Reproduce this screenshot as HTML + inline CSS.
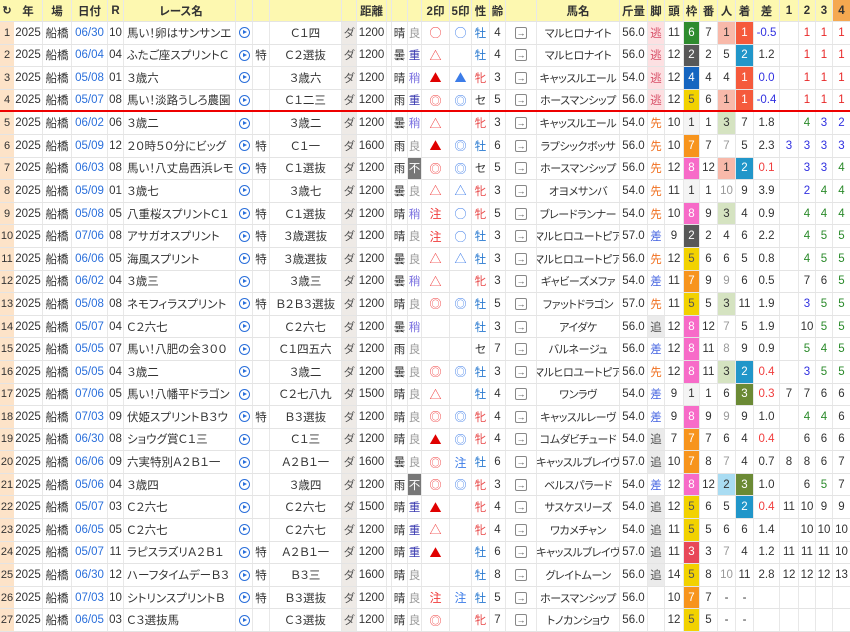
<!DOCTYPE html>
<html><head><meta charset="utf-8"><style>
*{margin:0;padding:0;box-sizing:border-box}
body{width:850px;height:632px;overflow:hidden;background:#fff;font-family:"Liberation Sans","Noto Sans CJK JP",sans-serif;font-size:11.5px;color:#333;font-feature-settings:"palt"}
.r{display:flex;height:22.6px;border-bottom:1px solid #e4e4e4}
.h{height:22px;background:#fdf8b0;font-weight:bold;border-bottom:1px solid #e4e4e4}
.r span{flex:none;display:flex;align-items:center;justify-content:center;border-right:1px solid #e8e8e8;white-space:nowrap;overflow:hidden}
.r span:nth-child(1){width:14px;background:#fde3c8;border-right:none;overflow:visible;font-size:11px}
.h span:nth-child(1){background:#fdf8b0}
.r span:nth-child(2){width:29px}.r span:nth-child(3){width:29px}.r span:nth-child(4){width:36px;color:#2a6fdb}
.r span:nth-child(5){width:16px}.r span:nth-child(6){width:112px;justify-content:flex-start;padding-left:3px}
.h span:nth-child(6){justify-content:center}
.r span:nth-child(7){width:17px}.r span:nth-child(8){width:17px}.r span:nth-child(9){width:72px}
.r span:nth-child(10){width:15px;background:#eeeae6;color:#555}.h span:nth-child(10){background:#fdf8b0}
.r span:nth-child(11){width:30px}.r span:nth-child(12){width:5px}.r span:nth-child(13){width:16px}
.r span:nth-child(14){width:14px}.r span:nth-child(15){width:28px}.r span:nth-child(16){width:22px}
.r span:nth-child(17){width:18px}.r span:nth-child(18){width:16px}.r span:nth-child(19){width:31px}
.r span:nth-child(20){width:83px;font-size:11px;letter-spacing:-0.4px}.h span:nth-child(20){font-size:11.5px;letter-spacing:0}
.r span:nth-child(21){width:28px}.r span:nth-child(22){width:17px}
.r span:nth-child(23){width:19px}.r span:nth-child(24){width:16px}.r span:nth-child(25){width:18px}
.r span:nth-child(26){width:18px}.r span:nth-child(27){width:18px}.r span:nth-child(28){width:26px}
.r span:nth-child(29){width:19px}.r span:nth-child(30){width:17px}.r span:nth-child(31){width:17px}.r span:nth-child(32){width:17px;border-right:none}
.r span:nth-child(15),.r span:nth-child(16){font-family:"Noto Sans CJK JP",sans-serif;font-size:12px;font-feature-settings:normal}
.h span:nth-child(15),.h span:nth-child(16){font-family:"Liberation Sans","Noto Sans CJK JP",sans-serif;font-size:11.5px}
.h span:nth-child(4){color:#333}
.h span:nth-child(32){background:#f5a850}
.b{color:#e00000}.r.rl{border-bottom:2px solid #e00}
.pc{display:block;width:11px;height:11px;border:1.5px solid #2a6fdb;border-radius:50%;position:relative}
.pc::after{content:"";position:absolute;left:3px;top:2px;border-left:4px solid #2a6fdb;border-top:2.5px solid transparent;border-bottom:2.5px solid transparent}
.ar{display:block;width:12px;height:12px;border:1px solid #888;border-radius:2px;font-style:normal;font-size:9px;line-height:10px;text-align:center;color:#555}
.rd{color:#f03c3c}.bl{color:#3c7ce8}.pu{color:#7a70e0}.nv{color:#3a3ab0}.gy{color:#999}
.fu{background:#777!important;color:#fff}
.m{color:#2a7ad0}.f{color:#e84848}
.ni{background:#fde0e2!important;color:#d85068}.sn{color:#f07020}.sa{color:#4060e0}.oi{background:#ebebeb!important;color:#555}
.w1{background:#f4f4f4}.w2{background:#585858;color:#fff}.w3{background:#e84858;color:#fff}.w4{background:#1565c0;color:#fff}
.w5{background:#f2d200;color:#555}.w6{background:#2e8b2e;color:#fff}.w7{background:#f7941d;color:#fff}.w8{background:#f76bc8;color:#fff}
.p1{background:#f8b9aa}.p2{background:#a9dcf2}.p3{background:#d5e3c1}
.c1{background:#f55a3c;color:#fff}.c2{background:#2196c9;color:#fff}.c3{background:#6b8a35;color:#fff}
.n1{color:#e82828}.n2{color:#3030e0}.n4{color:#2a8a2a}
</style></head><body>
<div class="r h"><span>↻</span><span>年</span><span>場</span><span>日付</span><span>R</span><span>レース名</span><span></span><span></span><span></span><span></span><span>距離</span><span></span><span></span><span></span><span>2印</span><span>5印</span><span>性</span><span>齢</span><span></span><span>馬名</span><span>斤量</span><span>脚</span><span>頭</span><span>枠</span><span>番</span><span>人</span><span>着</span><span>差</span><span>1</span><span>2</span><span>3</span><span>4</span></div>

<div class="r"><span>1</span><span>2025</span><span>船橋</span><span>06/30</span><span>10</span><span>馬い！卵はサンサンエ</span><span><i class="pc"></i></span><span></span><span>Ｃ１四</span><span>ダ</span><span>1200</span><span></span><span>晴</span><span class="gy">良</span><span class="rd">○</span><span class="bl">○</span><span class="m">牡</span><span>4</span><span><i class="ar">→</i></span><span>マルヒロナイト</span><span>56.0</span><span class="ni">逃</span><span>11</span><span class="w6">6</span><span>7</span><span class="p1">1</span><span class="c1">1</span><span class="n2">-0.5</span><span></span><span class="n1">1</span><span class="n1">1</span><span class="n1">1</span></div>
<div class="r"><span>2</span><span>2025</span><span>船橋</span><span>06/04</span><span>04</span><span>ふたご座スプリントＣ</span><span><i class="pc"></i></span><span>特</span><span>Ｃ２選抜</span><span>ダ</span><span>1200</span><span></span><span>曇</span><span class="nv">重</span><span class="rd">△</span><span></span><span class="m">牡</span><span>4</span><span><i class="ar">→</i></span><span>マルヒロナイト</span><span>56.0</span><span class="ni">逃</span><span>12</span><span class="w2">2</span><span>2</span><span>5</span><span class="c2">2</span><span>1.2</span><span></span><span class="n1">1</span><span class="n1">1</span><span class="n1">1</span></div>
<div class="r"><span>3</span><span>2025</span><span>船橋</span><span>05/08</span><span>01</span><span>３歳六</span><span><i class="pc"></i></span><span></span><span>３歳六</span><span>ダ</span><span>1200</span><span></span><span>晴</span><span class="pu">稍</span><span class="b">▲</span><span class="bl">▲</span><span class="f">牝</span><span>3</span><span><i class="ar">→</i></span><span>キャッスルエール</span><span>54.0</span><span class="ni">逃</span><span>12</span><span class="w4">4</span><span>4</span><span>4</span><span class="c1">1</span><span class="n2">0.0</span><span></span><span class="n1">1</span><span class="n1">1</span><span class="n1">1</span></div>
<div class="r rl"><span>4</span><span>2025</span><span>船橋</span><span>05/07</span><span>08</span><span>馬い！淡路うしろ農園</span><span><i class="pc"></i></span><span></span><span>Ｃ１二三</span><span>ダ</span><span>1200</span><span></span><span>雨</span><span class="nv">重</span><span class="rd">◎</span><span class="bl">◎</span><span>セ</span><span>5</span><span><i class="ar">→</i></span><span>ホースマンシップ</span><span>56.0</span><span class="ni">逃</span><span>12</span><span class="w5">5</span><span>6</span><span class="p1">1</span><span class="c1">1</span><span class="n2">-0.4</span><span></span><span class="n1">1</span><span class="n1">1</span><span class="n1">1</span></div>
<div class="r"><span>5</span><span>2025</span><span>船橋</span><span>06/02</span><span>06</span><span>３歳二</span><span><i class="pc"></i></span><span></span><span>３歳二</span><span>ダ</span><span>1200</span><span></span><span>曇</span><span class="pu">稍</span><span class="rd">△</span><span></span><span class="f">牝</span><span>3</span><span><i class="ar">→</i></span><span>キャッスルエール</span><span>54.0</span><span class="sn">先</span><span>10</span><span class="w1">1</span><span>1</span><span class="p3">3</span><span>7</span><span>1.8</span><span></span><span class="n4">4</span><span class="n2">3</span><span class="n2">2</span></div>
<div class="r"><span>6</span><span>2025</span><span>船橋</span><span>05/09</span><span>12</span><span>２０時５０分にビッグ</span><span><i class="pc"></i></span><span>特</span><span>Ｃ１一</span><span>ダ</span><span>1600</span><span></span><span>雨</span><span class="gy">良</span><span class="b">▲</span><span class="bl">◎</span><span class="m">牡</span><span>6</span><span><i class="ar">→</i></span><span>ラプシックボッサ</span><span>56.0</span><span class="sn">先</span><span>10</span><span class="w7">7</span><span>7</span><span class="gy">7</span><span>5</span><span>2.3</span><span class="n2">3</span><span class="n2">3</span><span class="n2">3</span><span class="n2">3</span></div>
<div class="r"><span>7</span><span>2025</span><span>船橋</span><span>06/03</span><span>08</span><span>馬い！八丈島西浜レモ</span><span><i class="pc"></i></span><span>特</span><span>Ｃ１選抜</span><span>ダ</span><span>1200</span><span></span><span>雨</span><span class="fu">不</span><span class="rd">◎</span><span class="bl">◎</span><span>セ</span><span>5</span><span><i class="ar">→</i></span><span>ホースマンシップ</span><span>56.0</span><span class="sn">先</span><span>12</span><span class="w8">8</span><span>12</span><span class="p1">1</span><span class="c2">2</span><span class="rd">0.1</span><span></span><span class="n2">3</span><span class="n2">3</span><span class="n4">4</span></div>
<div class="r"><span>8</span><span>2025</span><span>船橋</span><span>05/09</span><span>01</span><span>３歳七</span><span><i class="pc"></i></span><span></span><span>３歳七</span><span>ダ</span><span>1200</span><span></span><span>曇</span><span class="gy">良</span><span class="rd">△</span><span class="bl">△</span><span class="f">牝</span><span>3</span><span><i class="ar">→</i></span><span>オヨメサンバ</span><span>54.0</span><span class="sn">先</span><span>11</span><span class="w1">1</span><span>1</span><span class="gy">10</span><span>9</span><span>3.9</span><span></span><span class="n2">2</span><span class="n4">4</span><span class="n4">4</span></div>
<div class="r"><span>9</span><span>2025</span><span>船橋</span><span>05/08</span><span>05</span><span>八重桜スプリントＣ１</span><span><i class="pc"></i></span><span>特</span><span>Ｃ１選抜</span><span>ダ</span><span>1200</span><span></span><span>晴</span><span class="pu">稍</span><span class="rd">注</span><span class="bl">○</span><span class="f">牝</span><span>5</span><span><i class="ar">→</i></span><span>ブレードランナー</span><span>54.0</span><span class="sn">先</span><span>10</span><span class="w8">8</span><span>9</span><span class="p3">3</span><span>4</span><span>0.9</span><span></span><span class="n4">4</span><span class="n4">4</span><span class="n4">4</span></div>
<div class="r"><span>10</span><span>2025</span><span>船橋</span><span>07/06</span><span>08</span><span>アサガオスプリント</span><span><i class="pc"></i></span><span>特</span><span>３歳選抜</span><span>ダ</span><span>1200</span><span></span><span>晴</span><span class="gy">良</span><span class="rd">注</span><span class="bl">○</span><span class="m">牡</span><span>3</span><span><i class="ar">→</i></span><span>マルヒロユートピア</span><span>57.0</span><span class="sa">差</span><span>9</span><span class="w2">2</span><span>2</span><span>4</span><span>6</span><span>2.2</span><span></span><span class="n4">4</span><span class="n4">5</span><span class="n4">5</span></div>
<div class="r"><span>11</span><span>2025</span><span>船橋</span><span>06/06</span><span>05</span><span>海風スプリント</span><span><i class="pc"></i></span><span>特</span><span>３歳選抜</span><span>ダ</span><span>1200</span><span></span><span>曇</span><span class="gy">良</span><span class="rd">△</span><span class="bl">△</span><span class="m">牡</span><span>3</span><span><i class="ar">→</i></span><span>マルヒロユートピア</span><span>56.0</span><span class="sn">先</span><span>12</span><span class="w5">5</span><span>6</span><span>6</span><span>5</span><span>0.8</span><span></span><span class="n4">4</span><span class="n4">5</span><span class="n4">5</span></div>
<div class="r"><span>12</span><span>2025</span><span>船橋</span><span>06/02</span><span>04</span><span>３歳三</span><span><i class="pc"></i></span><span></span><span>３歳三</span><span>ダ</span><span>1200</span><span></span><span>曇</span><span class="pu">稍</span><span class="rd">△</span><span></span><span class="f">牝</span><span>3</span><span><i class="ar">→</i></span><span>ギャビーズメファ</span><span>54.0</span><span class="sa">差</span><span>11</span><span class="w7">7</span><span>9</span><span class="gy">9</span><span>6</span><span>0.5</span><span></span><span>7</span><span>6</span><span class="n4">5</span></div>
<div class="r"><span>13</span><span>2025</span><span>船橋</span><span>05/08</span><span>08</span><span>ネモフィラスプリント</span><span><i class="pc"></i></span><span>特</span><span>Ｂ２Ｂ３選抜</span><span>ダ</span><span>1200</span><span></span><span>晴</span><span class="gy">良</span><span class="rd">◎</span><span class="bl">◎</span><span class="m">牡</span><span>5</span><span><i class="ar">→</i></span><span>ファットドラゴン</span><span>57.0</span><span class="sn">先</span><span>11</span><span class="w5">5</span><span>5</span><span class="p3">3</span><span>11</span><span>1.9</span><span></span><span class="n2">3</span><span class="n4">5</span><span class="n4">5</span></div>
<div class="r"><span>14</span><span>2025</span><span>船橋</span><span>05/07</span><span>04</span><span>Ｃ２六七</span><span><i class="pc"></i></span><span></span><span>Ｃ２六七</span><span>ダ</span><span>1200</span><span></span><span>曇</span><span class="pu">稍</span><span></span><span></span><span class="m">牡</span><span>3</span><span><i class="ar">→</i></span><span>アイダケ</span><span>56.0</span><span class="oi">追</span><span>12</span><span class="w8">8</span><span>12</span><span class="gy">7</span><span>5</span><span>1.9</span><span></span><span>10</span><span class="n4">5</span><span class="n4">5</span></div>
<div class="r"><span>15</span><span>2025</span><span>船橋</span><span>05/05</span><span>07</span><span>馬い！八肥の会３００</span><span><i class="pc"></i></span><span></span><span>Ｃ１四五六</span><span>ダ</span><span>1200</span><span></span><span>雨</span><span class="gy">良</span><span></span><span></span><span>セ</span><span>7</span><span><i class="ar">→</i></span><span>バルネージュ</span><span>56.0</span><span class="sa">差</span><span>12</span><span class="w8">8</span><span>11</span><span class="gy">8</span><span>9</span><span>0.9</span><span></span><span class="n4">5</span><span class="n4">4</span><span class="n4">5</span></div>
<div class="r"><span>16</span><span>2025</span><span>船橋</span><span>05/05</span><span>04</span><span>３歳二</span><span><i class="pc"></i></span><span></span><span>３歳二</span><span>ダ</span><span>1200</span><span></span><span>曇</span><span class="gy">良</span><span class="rd">◎</span><span class="bl">◎</span><span class="m">牡</span><span>3</span><span><i class="ar">→</i></span><span>マルヒロユートピア</span><span>56.0</span><span class="sn">先</span><span>12</span><span class="w8">8</span><span>11</span><span class="p3">3</span><span class="c2">2</span><span class="rd">0.4</span><span></span><span class="n2">3</span><span class="n4">5</span><span class="n4">5</span></div>
<div class="r"><span>17</span><span>2025</span><span>船橋</span><span>07/06</span><span>05</span><span>馬い！八幡平ドラゴン</span><span><i class="pc"></i></span><span></span><span>Ｃ２七八九</span><span>ダ</span><span>1500</span><span></span><span>晴</span><span class="gy">良</span><span class="rd">△</span><span></span><span class="m">牡</span><span>4</span><span><i class="ar">→</i></span><span>ワンラヴ</span><span>54.0</span><span class="sa">差</span><span>9</span><span class="w1">1</span><span>1</span><span>6</span><span class="c3">3</span><span class="rd">0.3</span><span>7</span><span>7</span><span>6</span><span>6</span></div>
<div class="r"><span>18</span><span>2025</span><span>船橋</span><span>07/03</span><span>09</span><span>伏姫スプリントＢ３ウ</span><span><i class="pc"></i></span><span>特</span><span>Ｂ３選抜</span><span>ダ</span><span>1200</span><span></span><span>晴</span><span class="gy">良</span><span class="rd">◎</span><span class="bl">◎</span><span class="f">牝</span><span>4</span><span><i class="ar">→</i></span><span>キャッスルレーヴ</span><span>54.0</span><span class="sa">差</span><span>9</span><span class="w8">8</span><span>9</span><span class="gy">9</span><span>9</span><span>1.0</span><span></span><span class="n4">4</span><span class="n4">4</span><span>6</span></div>
<div class="r"><span>19</span><span>2025</span><span>船橋</span><span>06/30</span><span>08</span><span>ショウグ賞Ｃ１三</span><span><i class="pc"></i></span><span></span><span>Ｃ１三</span><span>ダ</span><span>1200</span><span></span><span>晴</span><span class="gy">良</span><span class="b">▲</span><span class="bl">◎</span><span class="f">牝</span><span>4</span><span><i class="ar">→</i></span><span>コムダビチュード</span><span>54.0</span><span class="oi">追</span><span>7</span><span class="w7">7</span><span>7</span><span>6</span><span>4</span><span class="rd">0.4</span><span></span><span>6</span><span>6</span><span>6</span></div>
<div class="r"><span>20</span><span>2025</span><span>船橋</span><span>06/06</span><span>09</span><span>六実特別Ａ２Ｂ１一</span><span><i class="pc"></i></span><span></span><span>Ａ２Ｂ１一</span><span>ダ</span><span>1600</span><span></span><span>曇</span><span class="gy">良</span><span class="rd">◎</span><span class="bl">注</span><span class="m">牡</span><span>6</span><span><i class="ar">→</i></span><span>キャッスルブレイヴ</span><span>57.0</span><span class="oi">追</span><span>10</span><span class="w7">7</span><span>8</span><span class="gy">7</span><span>4</span><span>0.7</span><span>8</span><span>8</span><span>6</span><span>7</span></div>
<div class="r"><span>21</span><span>2025</span><span>船橋</span><span>05/06</span><span>04</span><span>３歳四</span><span><i class="pc"></i></span><span></span><span>３歳四</span><span>ダ</span><span>1200</span><span></span><span>雨</span><span class="fu">不</span><span class="rd">◎</span><span class="bl">◎</span><span class="f">牝</span><span>3</span><span><i class="ar">→</i></span><span>ベルスパラード</span><span>54.0</span><span class="sa">差</span><span>12</span><span class="w8">8</span><span>12</span><span class="p2">2</span><span class="c3">3</span><span>1.0</span><span></span><span>6</span><span class="n4">5</span><span>7</span></div>
<div class="r"><span>22</span><span>2025</span><span>船橋</span><span>05/07</span><span>03</span><span>Ｃ２六七</span><span><i class="pc"></i></span><span></span><span>Ｃ２六七</span><span>ダ</span><span>1500</span><span></span><span>晴</span><span class="nv">重</span><span class="b">▲</span><span></span><span class="f">牝</span><span>4</span><span><i class="ar">→</i></span><span>サスケスリーズ</span><span>54.0</span><span class="oi">追</span><span>12</span><span class="w5">5</span><span>6</span><span>5</span><span class="c2">2</span><span class="rd">0.4</span><span>11</span><span>10</span><span>9</span><span>9</span></div>
<div class="r"><span>23</span><span>2025</span><span>船橋</span><span>06/05</span><span>05</span><span>Ｃ２六七</span><span><i class="pc"></i></span><span></span><span>Ｃ２六七</span><span>ダ</span><span>1200</span><span></span><span>晴</span><span class="nv">重</span><span class="rd">△</span><span></span><span class="f">牝</span><span>4</span><span><i class="ar">→</i></span><span>ワカメチャン</span><span>54.0</span><span class="oi">追</span><span>11</span><span class="w5">5</span><span>5</span><span>6</span><span>6</span><span>1.4</span><span></span><span>10</span><span>10</span><span>10</span></div>
<div class="r"><span>24</span><span>2025</span><span>船橋</span><span>05/07</span><span>11</span><span>ラピスラズリＡ２Ｂ１</span><span><i class="pc"></i></span><span>特</span><span>Ａ２Ｂ１一</span><span>ダ</span><span>1200</span><span></span><span>晴</span><span class="nv">重</span><span class="b">▲</span><span></span><span class="m">牡</span><span>6</span><span><i class="ar">→</i></span><span>キャッスルブレイヴ</span><span>57.0</span><span class="oi">追</span><span>11</span><span class="w3">3</span><span>3</span><span class="gy">7</span><span>4</span><span>1.2</span><span>11</span><span>11</span><span>11</span><span>10</span></div>
<div class="r"><span>25</span><span>2025</span><span>船橋</span><span>06/30</span><span>12</span><span>ハーフタイムデーＢ３</span><span><i class="pc"></i></span><span>特</span><span>Ｂ３三</span><span>ダ</span><span>1600</span><span></span><span>晴</span><span class="gy">良</span><span></span><span></span><span class="m">牡</span><span>8</span><span><i class="ar">→</i></span><span>グレイトムーン</span><span>56.0</span><span class="oi">追</span><span>14</span><span class="w5">5</span><span>8</span><span class="gy">10</span><span>11</span><span>2.8</span><span>12</span><span>12</span><span>12</span><span>13</span></div>
<div class="r"><span>26</span><span>2025</span><span>船橋</span><span>07/03</span><span>10</span><span>シトリンスプリントＢ</span><span><i class="pc"></i></span><span>特</span><span>Ｂ３選抜</span><span>ダ</span><span>1200</span><span></span><span>晴</span><span class="gy">良</span><span class="rd">注</span><span class="bl">注</span><span class="m">牡</span><span>5</span><span><i class="ar">→</i></span><span>ホースマンシップ</span><span>56.0</span><span></span><span>10</span><span class="w7">7</span><span>7</span><span>-</span><span>-</span><span></span><span></span><span></span><span></span><span></span></div>
<div class="r"><span>27</span><span>2025</span><span>船橋</span><span>06/05</span><span>03</span><span>Ｃ３選抜馬</span><span><i class="pc"></i></span><span></span><span>Ｃ３選抜</span><span>ダ</span><span>1200</span><span></span><span>晴</span><span class="gy">良</span><span class="rd">◎</span><span></span><span class="f">牝</span><span>7</span><span><i class="ar">→</i></span><span>トノカンショウ</span><span>56.0</span><span></span><span>12</span><span class="w5">5</span><span>5</span><span>-</span><span>-</span><span></span><span></span><span></span><span></span><span></span></div>
</body></html>
